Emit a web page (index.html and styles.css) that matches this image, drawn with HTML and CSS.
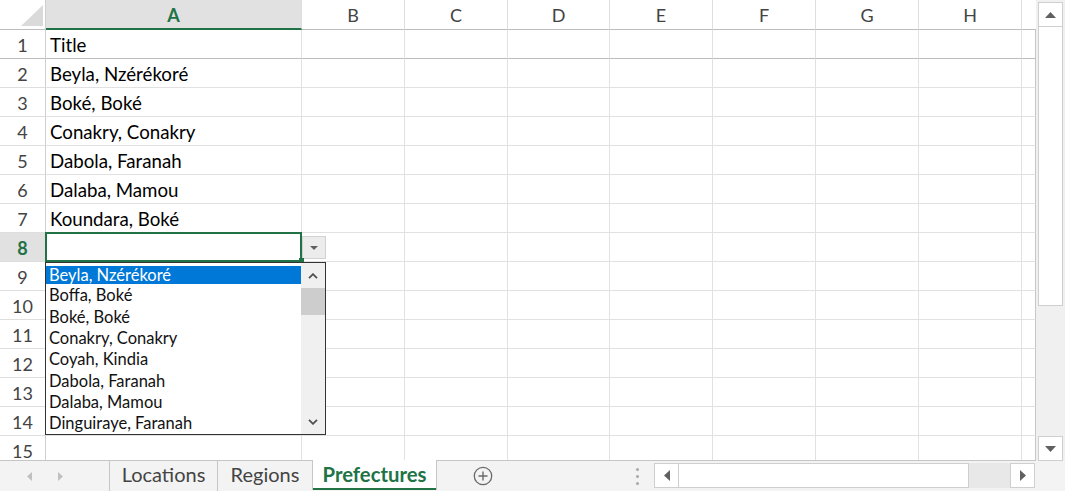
FILE: index.html
```html
<!DOCTYPE html>
<html>
<head>
<meta charset="utf-8">
<link rel="stylesheet" href="styles.css">
</head>
<body>
<div class="app">
  <div class="top">
    <div class="sheet">
      <div class="row hdr">
        <div class="corner"><svg width="45" height="29" viewBox="0 0 45 29"><polygon points="43,5 43,26 21,26" fill="#dadada"/></svg></div>
        <div class="ch sel">A</div><div class="ch">B</div><div class="ch">C</div><div class="ch">D</div><div class="ch">E</div><div class="ch">F</div><div class="ch">G</div><div class="ch">H</div><div class="ch end"></div>
      </div>
      <div class="row r1"><div class="rh">1</div><div class="c">Title</div><div class="c"></div><div class="c"></div><div class="c"></div><div class="c"></div><div class="c"></div><div class="c"></div><div class="c"></div><div class="c end"></div></div>
      <div class="row"><div class="rh">2</div><div class="c">Beyla, Nzérékoré</div><div class="c"></div><div class="c"></div><div class="c"></div><div class="c"></div><div class="c"></div><div class="c"></div><div class="c"></div><div class="c end"></div></div>
      <div class="row"><div class="rh">3</div><div class="c">Boké, Boké</div><div class="c"></div><div class="c"></div><div class="c"></div><div class="c"></div><div class="c"></div><div class="c"></div><div class="c"></div><div class="c end"></div></div>
      <div class="row"><div class="rh">4</div><div class="c">Conakry, Conakry</div><div class="c"></div><div class="c"></div><div class="c"></div><div class="c"></div><div class="c"></div><div class="c"></div><div class="c"></div><div class="c end"></div></div>
      <div class="row"><div class="rh">5</div><div class="c">Dabola, Faranah</div><div class="c"></div><div class="c"></div><div class="c"></div><div class="c"></div><div class="c"></div><div class="c"></div><div class="c"></div><div class="c end"></div></div>
      <div class="row"><div class="rh">6</div><div class="c">Dalaba, Mamou</div><div class="c"></div><div class="c"></div><div class="c"></div><div class="c"></div><div class="c"></div><div class="c"></div><div class="c"></div><div class="c end"></div></div>
      <div class="row"><div class="rh">7</div><div class="c">Koundara, Boké</div><div class="c"></div><div class="c"></div><div class="c"></div><div class="c"></div><div class="c"></div><div class="c"></div><div class="c"></div><div class="c end"></div></div>
      <div class="row"><div class="rh sel">8</div>
        <div class="c active">
          <div class="ddbtn"><svg width="8" height="4" viewBox="0 0 8 4"><polygon points="0,0 8,0 4,4" fill="#606060"/></svg></div>
          <div class="list">
            <div class="items">
              <div class="item picked">Beyla, Nzérékoré</div>
              <div class="item">Boffa, Boké</div>
              <div class="item">Boké, Boké</div>
              <div class="item">Conakry, Conakry</div>
              <div class="item">Coyah, Kindia</div>
              <div class="item">Dabola, Faranah</div>
              <div class="item">Dalaba, Mamou</div>
              <div class="item">Dinguiraye, Faranah</div>
            </div>
            <div class="lscroll">
              <div class="lbtn"><svg width="10" height="6" viewBox="0 0 10 6"><polyline points="1,5.2 5,1.2 9,5.2" fill="none" stroke="#505050" stroke-width="1.8"/></svg></div>
              <div class="lthumb"></div>
              <div class="ltrack"></div>
              <div class="lbtn"><svg width="10" height="6" viewBox="0 0 10 6"><polyline points="1,0.8 5,4.8 9,0.8" fill="none" stroke="#505050" stroke-width="1.8"/></svg></div>
            </div>
          </div>
        </div>
        <div class="c"></div><div class="c"></div><div class="c"></div><div class="c"></div><div class="c"></div><div class="c"></div><div class="c"></div><div class="c end"></div></div>
      <div class="row"><div class="rh">9</div><div class="c"></div><div class="c"></div><div class="c"></div><div class="c"></div><div class="c"></div><div class="c"></div><div class="c"></div><div class="c"></div><div class="c end"></div></div>
      <div class="row"><div class="rh">10</div><div class="c"></div><div class="c"></div><div class="c"></div><div class="c"></div><div class="c"></div><div class="c"></div><div class="c"></div><div class="c"></div><div class="c end"></div></div>
      <div class="row"><div class="rh">11</div><div class="c"></div><div class="c"></div><div class="c"></div><div class="c"></div><div class="c"></div><div class="c"></div><div class="c"></div><div class="c"></div><div class="c end"></div></div>
      <div class="row"><div class="rh">12</div><div class="c"></div><div class="c"></div><div class="c"></div><div class="c"></div><div class="c"></div><div class="c"></div><div class="c"></div><div class="c"></div><div class="c end"></div></div>
      <div class="row"><div class="rh">13</div><div class="c"></div><div class="c"></div><div class="c"></div><div class="c"></div><div class="c"></div><div class="c"></div><div class="c"></div><div class="c"></div><div class="c end"></div></div>
      <div class="row"><div class="rh">14</div><div class="c"></div><div class="c"></div><div class="c"></div><div class="c"></div><div class="c"></div><div class="c"></div><div class="c"></div><div class="c"></div><div class="c end"></div></div>
      <div class="row"><div class="rh">15</div><div class="c"></div><div class="c"></div><div class="c"></div><div class="c"></div><div class="c"></div><div class="c"></div><div class="c"></div><div class="c"></div><div class="c end"></div></div>
    </div>
    <div class="vscroll">
      <div class="sbtn"><svg width="11" height="6" viewBox="0 0 11 6"><polygon points="0,6 11,6 5.5,0" fill="#606060"/></svg></div>
      <div class="vthumb"></div>
      <div class="vtrack"></div>
      <div class="sbtn"><svg width="11" height="6" viewBox="0 0 11 6"><polygon points="0,0 11,0 5.5,6" fill="#606060"/></svg></div>
    </div>
  </div>
  <div class="bottom">
    <div class="nav">
      <svg class="navl" width="5" height="9" viewBox="0 0 5 9"><polygon points="5,0 5,9 0,4.5" fill="#c0c0c0"/></svg>
      <svg class="navr" width="5" height="9" viewBox="0 0 5 9"><polygon points="0,0 0,9 5,4.5" fill="#c0c0c0"/></svg>
    </div>
    <div class="tab t-loc">Locations</div>
    <div class="tab t-reg">Regions</div>
    <div class="tab active">Prefectures</div>
    <div class="add"><svg width="20" height="20" viewBox="0 0 20 20"><circle cx="10" cy="10" r="8.7" fill="none" stroke="#6a6a6a" stroke-width="1.3"/><path d="M10 5.5V14.5M5.5 10H14.5" stroke="#6a6a6a" stroke-width="1.4"/></svg></div>
    <div class="spacer"></div>
    <div class="dots"><span></span><span></span><span></span></div>
    <div class="hscroll">
      <div class="hbtn"><svg width="6" height="11" viewBox="0 0 6 11"><polygon points="6,0 6,11 0,5.5" fill="#606060"/></svg></div>
      <div class="hthumb"></div>
      <div class="htrack"></div>
      <div class="hbtn"><svg width="6" height="11" viewBox="0 0 6 11"><polygon points="0,0 0,11 6,5.5" fill="#606060"/></svg></div>
    </div>
  </div>
</div>
</body>
</html>
```
FILE: styles.css
```css
* { box-sizing: border-box; }
body { margin: 0; font-family: Lato, "Open Sans", sans-serif; background: #fff; }
.app { width: 1065px; height: 491px; display: flex; flex-direction: column; overflow: hidden; background: #fff; }
.top { display: flex; height: 461px; }
.sheet { width: 1036px; height: 461px; overflow: hidden; border-bottom: 1px solid #c6c6c6; }
.row { display: grid; grid-template-columns: 46px 256px 103px 103px 102px 103px 103px 103px 103px 14px; height: 29px; }
.hdr { height: 30px; }
.hdr > div { border-bottom: 1px solid #bdbdbd; border-right: 1px solid #dedede; display: flex; align-items: center; justify-content: center; font-size: 18px; color: #444; padding-top: 1px; }
.hdr > .corner { border-right: 1px solid #cfcfcf; padding: 0; display: block; }
.corner svg { display: block; }
.ch.end { border-right: none; }
.ch.sel { background: #e1e1e1; color: #217346; font-weight: bold; border-bottom: 2px solid #217346; }
.rh { border-right: 1px solid #cfcfcf; border-bottom: 1px solid #dedede; font-size: 18px; color: #444; display: flex; align-items: center; justify-content: center; padding-top: 2px; }
.rh.sel { background: #e1e1e1; color: #217346; font-weight: bold; }
.c { border-right: 1px solid #e1e1e1; border-bottom: 1px solid #e1e1e1; font-size: 18.7px; color: #000; padding-left: 4px; padding-top: 2px; display: flex; align-items: center; white-space: nowrap; }
.c.end { border-right: 1px solid #c6c6c6; }
.r1 > div { border-bottom-color: #bdbdbd; }
.c.active { position: relative; }
.c.active::after { content: ""; position: absolute; left: -1px; top: -1px; right: -1px; bottom: -1px; border: 2px solid #217346; }
.c.active::before { content: ""; position: absolute; right: -3px; bottom: -2px; width: 5px; height: 5px; background: #217346; z-index: 3; }
.ddbtn { position: absolute; left: 256px; top: 3px; width: 24px; height: 23px; background: #ececec; border: 1px solid #d2d2d2; display: flex; align-items: center; justify-content: center; z-index: 2; }
.ddbtn svg { display: block; }
.list { position: absolute; left: -1px; top: 29px; width: 281px; height: 173px; background: #fff; border: 1px solid #333; display: flex; z-index: 4; }
.items { flex: 1; }
.item { height: 21.3px; font-size: 16.5px; color: #111; padding-left: 3px; display: flex; align-items: center; padding-top: 1px; white-space: nowrap; }
.item.picked { background: linear-gradient(#fff 3px, #0078d7 3px, #0078d7 21px, #fff 21px); color: #fff; padding-top: 3px; }
.lscroll { width: 24px; background: #f0f0f0; display: flex; flex-direction: column; }
.lbtn { height: 25px; display: flex; align-items: center; justify-content: center; }
.lbtn svg { display: block; }
.lthumb { height: 27px; background: #cdcdcd; }
.ltrack { flex: 1; }
.vscroll { width: 29px; background: #f0f0f0; padding: 2px 2px 0 2px; display: flex; flex-direction: column; }
.sbtn { height: 25px; width: 25px; background: #fff; border: 1px solid #cfcfcf; display: flex; align-items: center; justify-content: center; }
.sbtn svg { display: block; }
.vthumb { height: 279px; width: 25px; background: #fff; border: 1px solid #cfcfcf; border-top: none; }
.vtrack { flex: 1; }
.bottom { height: 30px; background: #f3f3f3; display: flex; }
.nav { width: 109px; display: flex; align-items: center; }
.nav svg { display: block; }
.navl { margin-left: 27px; }
.navr { margin-left: 26px; }
.tab { display: flex; align-items: center; justify-content: center; font-size: 20px; color: #444; border-left: 1px solid #c6c6c6; padding-bottom: 4px; white-space: nowrap; }
.t-loc { width: 108px; }
.t-reg { width: 95px; }
.tab.active { width: 125px; height: 30px; margin-top: -1px; background: #fff; color: #217346; font-weight: bold; font-size: 20.3px; border-right: 1px solid #c6c6c6; box-shadow: inset 0 -2px 0 #217346; padding-bottom: 3px; }
.add { margin-left: 36px; display: flex; align-items: center; }
.add svg { display: block; }
.spacer { flex: 1; }
.dots { width: 3px; margin-right: 15px; display: flex; flex-direction: column; justify-content: center; gap: 4px; }
.dots span { width: 3px; height: 3px; background: #a8a8a8; border-radius: 50%; }
.hscroll { width: 381px; height: 25px; margin-top: 2px; margin-right: 30px; display: flex; background: #e8e8e8; }
.hbtn { width: 25px; height: 25px; background: #fff; border: 1px solid #cfcfcf; display: flex; align-items: center; justify-content: center; }
.hbtn svg { display: block; }
.hthumb { width: 290px; background: #fff; border: 1px solid #cfcfcf; border-left: none; }
.htrack { flex: 1; }
```
